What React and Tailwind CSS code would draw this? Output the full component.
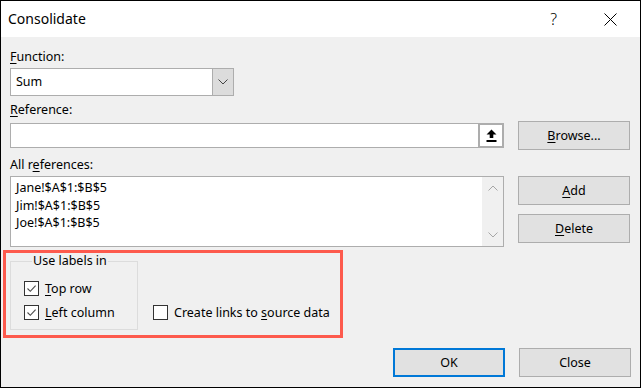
import React from 'react';

const U = ({ children }) => <span className="underline underline-offset-[2px] decoration-1">{children}</span>;

const Check = ({ checked }) => (
    <span className="w-[15px] h-[15px] border border-[#333333] bg-white flex items-center justify-center shrink-0">
        {checked && (
            <svg width="11" height="11" viewBox="0 0 11 11">
                <path d="M1.5 5.5 L4.3 8.3 L9.6 2.6" fill="none" stroke="#4a4a4a" strokeWidth="1.1" />
            </svg>
        )}
    </span>
);

const Btn = ({ children, primary }) => (
    <div
        className={`h-[29px] w-[112px] flex items-center justify-center bg-[#e1e1e1] ${primary ? 'border-2 border-[#0078d7]' : 'border border-[#adadad]'}`}
    >
        {children}
    </div>
);

const Chevron = ({ up, color = '#444444' }) => (
    <svg width="10" height="6" viewBox="0 0 10 6">
        <path d={up ? 'M0.5 5.5 L5 1 L9.5 5.5' : 'M0.5 0.5 L5 5 L9.5 0.5'} fill="none" stroke={color} strokeWidth="1" />
    </svg>
);

const App = () => {
    return (
        <div className="w-[641px] h-[388px] border border-black bg-[#f0f0f0] flex flex-col font-['Segoe_UI','Noto_Sans',sans-serif] text-[12.5px] leading-[18px] text-black overflow-hidden">
            {/* Title bar */}
            <div className="h-[36px] shrink-0 bg-white flex items-center pl-[7px] pr-[23px]">
                <span className="text-[14px]">Consolidate</span>
                <span className="ml-auto text-[16px] font-light">?</span>
                <svg className="ml-[47px]" width="13" height="13" viewBox="0 0 13 13">
                    <path d="M0.5 0.5 L12.5 12.5 M12.5 0.5 L0.5 12.5" stroke="#000" strokeWidth="1" />
                </svg>
            </div>

            {/* Body */}
            <div className="flex flex-col pl-[9px] pr-[9px]">
                <div className="mt-[11px]"><U>F</U>unction:</div>
                <div className="mt-[2px] h-[28px] w-[224px] flex bg-white border border-[#adadad]">
                    <div className="flex-1 flex items-center pl-[5px]">Sum</div>
                    <div className="w-[22px] bg-[#dcdcdc] border border-[#adadad] -mt-px -mb-px -mr-px flex items-center justify-center">
                        <Chevron />
                    </div>
                </div>

                <div className="mt-[5px]"><U>R</U>eference:</div>
                <div className="mt-[2px] flex items-center">
                    <div className="w-[494px] h-[25px] bg-white border border-[#adadad] flex justify-end">
                        <div className="w-[26px] -my-px -mr-px border-2 border-[#adadad] bg-white flex items-center justify-center">
                            <svg width="11" height="13" viewBox="0 0 11 13">
                                <path d="M5.5 0.5 L10.5 5.5 L7.3 5.5 L7.3 9 L3.7 9 L3.7 5.5 L0.5 5.5 Z" fill="#000" />
                                <rect x="0.5" y="11" width="10" height="2" fill="#000" />
                            </svg>
                        </div>
                    </div>
                    <div className="ml-[14px]">
                        <Btn><span><U>B</U>rowse...</span></Btn>
                    </div>
                </div>

                <div className="mt-[6px]">All r<U>e</U>ferences:</div>
                <div className="mt-[2px] flex">
                    <div className="w-[494px] h-[71px] bg-white border border-[#adadad] flex">
                        <div className="flex-1 pl-[5px] pt-[2px] leading-[17.5px]">
                            <div>Jane!$A$1:$B$5</div>
                            <div>Jim!$A$1:$B$5</div>
                            <div>Joe!$A$1:$B$5</div>
                        </div>
                        <div className="w-[21px] bg-[#f0f0f0] flex flex-col items-center justify-between py-[8px]">
                            <Chevron up color="#a6a6a6" />
                            <Chevron color="#a6a6a6" />
                        </div>
                    </div>
                    <div className="ml-[14px] flex flex-col gap-[9px]">
                        <Btn><span><U>A</U>dd</span></Btn>
                        <Btn><span><U>D</U>elete</span></Btn>
                    </div>
                </div>

                {/* Labels options */}
                <div className="mt-[3px] -ml-[7px] w-[340px] h-[88px] border-[3px] border-[#fd5a4d] flex">
                    <fieldset className="ml-[4px] mb-[5px] w-[128px] border border-[#dcdcdc] pl-[13px] pt-[12px] pb-[9px] flex flex-col gap-[9px]">
                        <legend className="ml-[8px] px-px leading-[16px]">Use labels in</legend>
                        <label className="flex items-center gap-[6px] h-[15px]">
                            <Check checked />
                            <span><U>T</U>op row</span>
                        </label>
                        <label className="flex items-center gap-[6px] h-[15px]">
                            <Check checked />
                            <span><U>L</U>eft column</span>
                        </label>
                    </fieldset>
                    <label className="self-end mb-[15px] ml-[15px] flex items-center gap-[6px] h-[15px]">
                        <Check />
                        <span>Create links to <U>s</U>ource data</span>
                    </label>
                </div>

                <div className="mt-[10px] flex justify-end gap-[14px]">
                    <Btn primary>OK</Btn>
                    <Btn>Close</Btn>
                </div>
            </div>
        </div>
    );
};

export default App;
